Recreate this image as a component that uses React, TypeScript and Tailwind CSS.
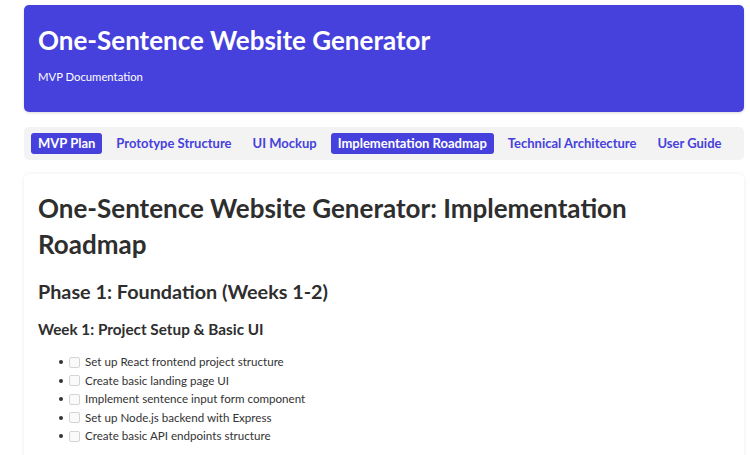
import React from "react";

const tabs = [
  { label: "MVP Plan", active: true },
  { label: "Prototype Structure", active: false },
  { label: "UI Mockup", active: false },
  { label: "Implementation Roadmap", active: true },
  { label: "Technical Architecture", active: false },
  { label: "User Guide", active: false },
];

const items = [
  "Set up React frontend project structure",
  "Create basic landing page UI",
  "Implement sentence input form component",
  "Set up Node.js backend with Express",
  "Create basic API endpoints structure",
];

export default function App() {
  return (
    <div
      className="min-h-[455px] bg-white pl-[24px] pr-[6px] pt-[5px] text-[#333]"
      style={{ fontFamily: 'Lato, "DejaVu Sans", sans-serif' }}
    >
      <header className="h-[107px] rounded-[5px] bg-[#4641dc] px-[14px] pt-[19px] text-white shadow-[0_1px_3px_rgba(0,0,0,0.15)]">
        <h1 className="whitespace-nowrap text-[26px] font-bold leading-[32px]">One-Sentence Website Generator</h1>
        <p className="mt-[13px] text-[11.3px] leading-[16px]">MVP Documentation</p>
      </header>

      <nav className="mt-[15px] flex h-[33px] items-start gap-[7px] rounded-[5px] bg-[#f3f3f3] px-[7px] pt-[6px]">
        {tabs.map((t) => (
          <span
            key={t.label}
            className={
              t.active
                ? "h-[21px] whitespace-nowrap rounded-[3px] bg-[#4641dc] px-[7px] text-[13px] font-bold leading-[21px] text-white"
                : "h-[21px] whitespace-nowrap rounded-[3px] px-[7px] text-[13px] font-bold leading-[21px] text-[#4641dc]"
            }
          >
            {t.label}
          </span>
        ))}
      </nav>

      <main className="mt-[14px] h-[300px] rounded-[5px] bg-white px-[14px] pt-[16px] shadow-[0_0_4px_rgba(0,0,0,0.08)]">
        <h1 className="text-[26px] font-bold leading-[36px] text-[#2e2e2e]">
          One-Sentence Website Generator: Implementation Roadmap
        </h1>
        <h2 className="mt-[17px] text-[19.8px] font-bold leading-[24px] text-[#2e2e2e]">
          Phase 1: Foundation (Weeks 1-2)
        </h2>
        <h3 className="mt-[16px] text-[15.3px] font-bold leading-[20px] text-[#2e2e2e]">
          Week 1: Project Setup &amp; Basic UI
        </h3>
        <ul className="mt-[14px] pl-[21px]">
          {items.map((it) => (
            <li key={it} className="flex h-[18.5px] items-center whitespace-nowrap text-[11.6px] leading-[18.5px] text-[#333]">
              <span className="mr-[6px] inline-block h-[4px] w-[4px] rounded-full bg-[#333]" />
              <span className="mr-[5px] inline-block h-[11px] w-[11px] rounded-[2px] border border-[#d4d4d4] bg-[#fafafa]" />
              {it}
            </li>
          ))}
        </ul>
      </main>
    </div>
  );
}
